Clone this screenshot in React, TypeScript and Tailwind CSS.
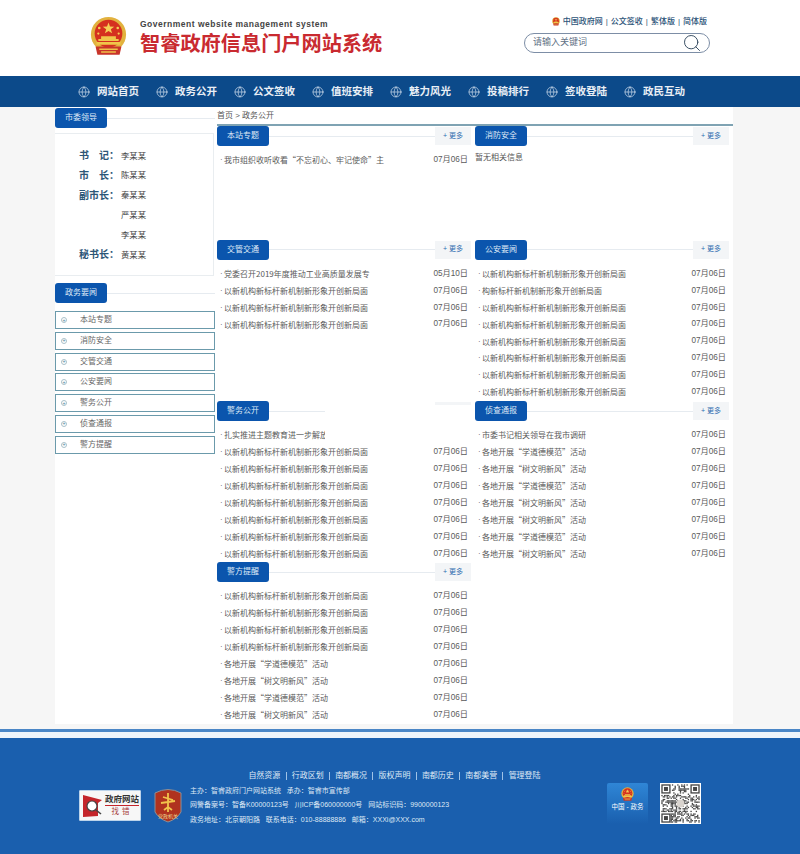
import React from 'react';
import { Globe, Search } from 'lucide-react';

const FONT = '[font-family:"Liberation_Sans","Noto_Sans_CJK_SC",sans-serif]';

const NAV = ['网站首页', '政务公开', '公文签收', '值班安排', '魅力风光', '投稿排行', '签收登陆', '政民互动'];
const SIDE = ['本站专题', '消防安全', '交管交通', '公安要闻', '警务公开', '侦查通报', '警方提醒'];
const LEADERS = [
  ['书\u3000记：', '李某某'],
  ['市\u3000长：', '陈某某'],
  ['副市长：', '秦某某'],
  ['', '严某某'],
  ['', '李某某'],
  ['秘书长：', '黄某某'],
];
const FOOT_LINKS = ['自然资源', '行政区划', '南都概况', '版权声明', '南都历史', '南都美营', '管理登陆'];

const XIN = '以新机构新标杆新机制新形象开创新局面';
const XUE = '各地开展“学道德模范”活动';
const SHU = '各地开展“树文明新风”活动';
const D = '07月06日';

type Row = [string, string];
const r = (t: string, d = D): Row => [t, d];

const Emblem = ({ size }: { size: number }) => (
  <svg width={size} height={size * 1.1} viewBox="0 0 40 44">
    <circle cx="20" cy="20" r="19" fill="#e2b23e" />
    <circle cx="20" cy="19" r="15" fill="#d5301f" />
    <path d="M20 7l1.6 4.4 4.6.1-3.7 2.8 1.4 4.4-3.9-2.6-3.9 2.6 1.4-4.4-3.7-2.8 4.6-.1z" fill="#f5cf55" />
    <circle cx="10" cy="13" r="1.4" fill="#f5cf55" />
    <circle cx="30" cy="13" r="1.4" fill="#f5cf55" />
    <circle cx="9" cy="19" r="1.2" fill="#f5cf55" />
    <circle cx="31" cy="19" r="1.2" fill="#f5cf55" />
    <path d="M9 25h22v2H9zM12 22h16v3H12zM7 28h26v3H7z" fill="#f0c64a" />
    <path d="M6 33h28l-2 9H8z" fill="#c9352a" />
    <path d="M10 36h20M12 39h16" stroke="#efc04a" strokeWidth="1.5" />
  </svg>
);

const Tab = ({ label }: { label: string }) => (
  <div className="flex h-[20px] w-[52px] shrink-0 items-center justify-center rounded-[3px] bg-[#0b55ad] text-[8px] text-[#dfeaf7]">
    {label}
  </div>
);

const Panel = ({ title, rows, more = true, empty }: { title: string; rows: Row[]; more?: boolean; empty?: string }) => (
  <div className="flex flex-col">
    <div className="flex h-[20px] items-center pr-[4px]">
      <Tab label={title} />
      <div className="h-px flex-1 bg-[#e6ebf0]" />
      {more && (
        <div className="flex h-[18px] w-[36px] items-center justify-center bg-[#f3f5f7] text-[7px] text-[#2f6db0]">
          + 更多
        </div>
      )}
    </div>
    {empty && <p className="mt-[2.5px] text-[8px] leading-[17px] text-[#555]">{empty}</p>}
    {rows.length > 0 && (
      <ul className="mt-[6px] flex flex-col pr-[7px]">
        {rows.map(([text, date], i) => (
          <li key={i} className="flex h-[16.9px] items-center justify-between pl-[3px] text-[8px] text-[#5a5a5a]">
            <span className="flex items-center whitespace-nowrap">
              <span className="w-[4px]">·</span>
              <span className='[font-family:"Noto_Sans_CJK_SC",sans-serif]'>{text}</span>
            </span>
            <span className="text-[8.2px]">{date}</span>
          </li>
        ))}
      </ul>
    )}
  </div>
);

const QR_SIZE = 29;
const isFinder = (x: number, y: number) => (x < 7 && y < 7) || (x > QR_SIZE - 8 && y < 7) || (x < 7 && y > QR_SIZE - 8);

// not a real code, only a stable speckle of modules
const speckle = (x: number, y: number) => {
  const v = Math.sin(x * 12.9898 + y * 78.233) * 43758.5453;
  return v - Math.floor(v) < 0.5;
};

const QrCode = () => {
  const cells: React.ReactNode[] = [];
  for (let y = 0; y < QR_SIZE; y++) {
    for (let x = 0; x < QR_SIZE; x++) {
      if (isFinder(x, y)) continue;
      if ((x === 7 || x === QR_SIZE - 8) && y < 8) continue;
      if ((y === 7 || y === QR_SIZE - 8) && (x < 8 || x > QR_SIZE - 9)) continue;
      if (speckle(x, y)) cells.push(<rect key={`${x}-${y}`} x={x} y={y} width="1" height="1" fill="#444" />);
    }
  }
  const finder = (x: number, y: number) => (
    <g key={`${x}-${y}`}>
      <rect x={x + 0.5} y={y + 0.5} width="6" height="6" fill="none" stroke="#444" />
      <rect x={x + 2} y={y + 2} width="3" height="3" fill="#444" />
    </g>
  );
  return (
    <svg width="41" height="41" viewBox="-1 -1 31 31" className="bg-white">
      {cells}
      {finder(0, 0)}
      {finder(QR_SIZE - 7, 0)}
      {finder(0, QR_SIZE - 7)}
      <circle cx="14.5" cy="14.5" r="3" fill="#d9d4cf" />
    </svg>
  );
};

const App = () => (
  <div className={`flex min-h-[854px] w-[800px] flex-col bg-[#f6f6f6] ${FONT}`}>
    <header className="flex h-[76px] items-start justify-between bg-white pl-[90px] pr-[90px]">
      <div className="flex pt-[16px]">
        <Emblem size={37} />
        <div className="ml-[13px] flex flex-col pt-[2px]">
          <span className="text-[8.5px] font-bold leading-[12px] tracking-[0.5px] text-[#444]">Government website management system</span>
          <span className="mt-[1px] text-[20.2px] font-bold leading-[26px] text-[#c92a30]">智睿政府信息门户网站系统</span>
        </div>
      </div>
      <div className="flex flex-col items-end pt-[16px]">
        <div className="flex h-[11px] items-center gap-[3px] pr-[3px] text-[8px] font-medium text-[#2c5378]">
          <Emblem size={8} />
          <span>中国政府网</span>
          <span>|</span>
          <span>公文签收</span>
          <span>|</span>
          <span>繁体版</span>
          <span>|</span>
          <span>简体版</span>
        </div>
        <div className="mt-[6px] flex h-[20px] w-[186px] items-center justify-between rounded-full border border-[#7d8ea6] pl-[8px] pr-[7px] text-[9px] text-[#5f7185]">
          <span>请输入关键词</span>
          <Search size={20} strokeWidth={1.1} className="text-[#2b4258]" />
        </div>
      </div>
    </header>

    <nav className="flex h-[31px] items-center bg-[#0c4a8a] pl-[78px]">
      {NAV.map((item) => (
        <div key={item} className="flex w-[78px] items-center text-[10.5px] font-bold text-[#e9eff6]">
          <Globe size={12} strokeWidth={1.3} className="mr-[7px] text-[#dbe6f2]" />
          {item}
        </div>
      ))}
    </nav>

    <main className="mx-[55px] flex h-[617px] w-[678px] bg-white">
      <aside className="flex w-[160px] shrink-0 flex-col">
        <div className="mt-px flex items-center">
          <Tab label="市委领导" />
          <div className="h-px flex-1 bg-[#e6ebf0]" />
        </div>
        <dl className="mr-px mt-[5px] flex h-[143px] flex-col border-y border-r border-[#e9edf0] pl-[24px] pt-[12px]">
          {LEADERS.map(([title, name], i) => (
            <div key={i} className="flex h-[19.8px] items-center">
              <dt className="w-[42px] [font-family:'Liberation_Serif','Noto_Sans_CJK_SC',serif] text-[10px] font-bold text-[#2d5677]">{title}</dt>
              <dd className="text-[8.4px] text-[#444]">{name}</dd>
            </div>
          ))}
        </dl>
        <div className="mt-[7px] flex items-center">
          <Tab label="政务要闻" />
          <div className="h-px flex-1 bg-[#e6ebf0]" />
        </div>
        <ul className="mt-[8px] flex flex-col gap-[2.8px]">
          {SIDE.map((item) => (
            <li key={item} className="flex h-[18px] items-center border border-[#6b9aab] pl-[5px] text-[8px] text-[#666]">
              <span className="flex h-[6px] w-[6px] items-center justify-center rounded-full border border-[#a9c0c9] text-[5px] leading-none text-[#4b7f95]">+</span>
              <span className="ml-[13px]">{item}</span>
            </li>
          ))}
        </ul>
      </aside>

      <section className="ml-[2px] flex flex-1 flex-col">
        <div className="flex h-[19px] items-center border-b-2 border-[#7fa3b3] text-[8px] text-[#555]">首页 &gt; 政务公开</div>
        <div className="relative grid grid-cols-[258px_258px] grid-rows-[113.5px_161.5px_161px_161px]">
          <Panel title="本站专题" rows={[r('我市组织收听收看“不忘初心、牢记使命”主')]} />
          <Panel title="消防安全" rows={[]} empty="暂无相关信息" />
          <Panel
            title="交管交通"
            rows={[r('党委召开2019年度推动工业高质量发展专', '05月10日'), r(XIN), r(XIN), r(XIN)]}
          />
          <Panel
            title="公安要闻"
            rows={[r(XIN), r('构新标杆新机制新形象开创新局面'), r(XIN), r(XIN), r(XIN), r(XIN), r(XIN), r(XIN)]}
          />
          <Panel
            title="警务公开"
            rows={[r('扎实推进主题教育进一步解放'), r(XIN), r(XIN), r(XIN), r(XIN), r(XIN), r(XIN), r(XIN)]}
          />
          <Panel
            title="侦查通报"
            rows={[r('市委书记相关领导在我市调研'), r(XUE), r(SHU), r(XUE), r(SHU), r(SHU), r(XUE), r(SHU)]}
          />
          <Panel
            title="警方提醒"
            rows={[r(XIN), r(XIN), r(XIN), r(XIN), r(XUE), r(SHU), r(XUE), r(SHU)]}
          />
          {/* the white patch that lies over the 警务公开 header in the picture */}
          <div className="absolute left-[108px] top-[279px] h-[38px] w-[147px] bg-white" />
        </div>
      </section>
    </main>

    <div className="mt-[5px] h-[9px] border-y-[3px] border-t-[#4a86c6] border-b-[#eef4fa] bg-[#eef4fa]" />

    <footer className="flex flex-1 flex-col bg-[#1a5fae] text-[#dfe9f5]">
      <div className="mt-[33px] flex h-[10px] items-center justify-center pr-[11px] text-[8px]">
        {FOOT_LINKS.map((link, i) => (
          <React.Fragment key={link}>
            {i > 0 && <span className="mx-[5.2px] h-[8px] w-px bg-[#9fc2e6]" />}
            <span>{link}</span>
          </React.Fragment>
        ))}
      </div>
      <div className="mt-[3px] flex items-start pl-[79px] pr-[99px]">
        <div className="mt-[6px] flex h-[31px] w-[62px] items-center rounded-[1px] border border-[#bcd3ea] bg-[#f7f7f7] pl-[3px]">
          <svg width="20" height="24" viewBox="0 0 20 24">
            <path d="M0 1l19 5-4 3v13L0 23z" fill="#c4252b" />
            <circle cx="9" cy="12" r="5" fill="#fff" stroke="#444" strokeWidth="1.2" />
            <path d="M13 16l5 4" stroke="#444" strokeWidth="1.6" />
          </svg>
          <div className="ml-[2px] flex flex-col items-center [font-family:'Liberation_Serif','Noto_Sans_CJK_SC',serif] text-[#333]">
            <span className="border-b border-[#c4252b] text-[8.5px] font-bold leading-[11px]">政府网站</span>
            <span className="text-[7.5px] leading-[11px] tracking-[3px] text-[#a8433f]">找错</span>
          </div>
        </div>
        <svg width="30" height="35" viewBox="0 0 30 35" className="ml-[12px] mt-[4px]">
          <path d="M2 5q13-7 26 0v19q-4 7-13 10Q6 31 2 24z" fill="#b0321f" stroke="#8d8f96" />
          <path d="M15 5v19M10 9l10 3M8 15l14-2M11 22l4-3 4 3" stroke="#f1c34b" strokeWidth="1.8" fill="none" />
          <text x="15" y="29.5" textAnchor="middle" fontSize="5" fill="#f3d98f">党政机关</text>
        </svg>
        <div className="ml-[7px] flex flex-col text-[7px] leading-[14.3px]">
          <span>主办：智睿政府门户网站系统&nbsp;&nbsp;&nbsp;承办：智睿市宣传部</span>
          <span>网警备案号：智备K00000123号&nbsp;&nbsp;&nbsp;川ICP备060000000号&nbsp;&nbsp;&nbsp;网站标识码：9900000123</span>
          <span>政务地址：北京朝阳路&nbsp;&nbsp;&nbsp;联系电话：010-88888886&nbsp;&nbsp;&nbsp;邮箱：XXXi@XXX.com</span>
        </div>
        <div className="ml-auto mt-[-1px] flex h-[41px] w-[41px] flex-col items-center rounded-[2px] bg-gradient-to-b from-[#2f86d6] to-[#1a5fae] pt-[4px]">
          <Emblem size={13} />
          <span className="mt-[1px] text-[6.5px] text-white">中国 - 政务</span>
        </div>
        <div className="ml-[12px] mt-[-1px]">
          <QrCode />
        </div>
      </div>
    </footer>
  </div>
);

export default App;
